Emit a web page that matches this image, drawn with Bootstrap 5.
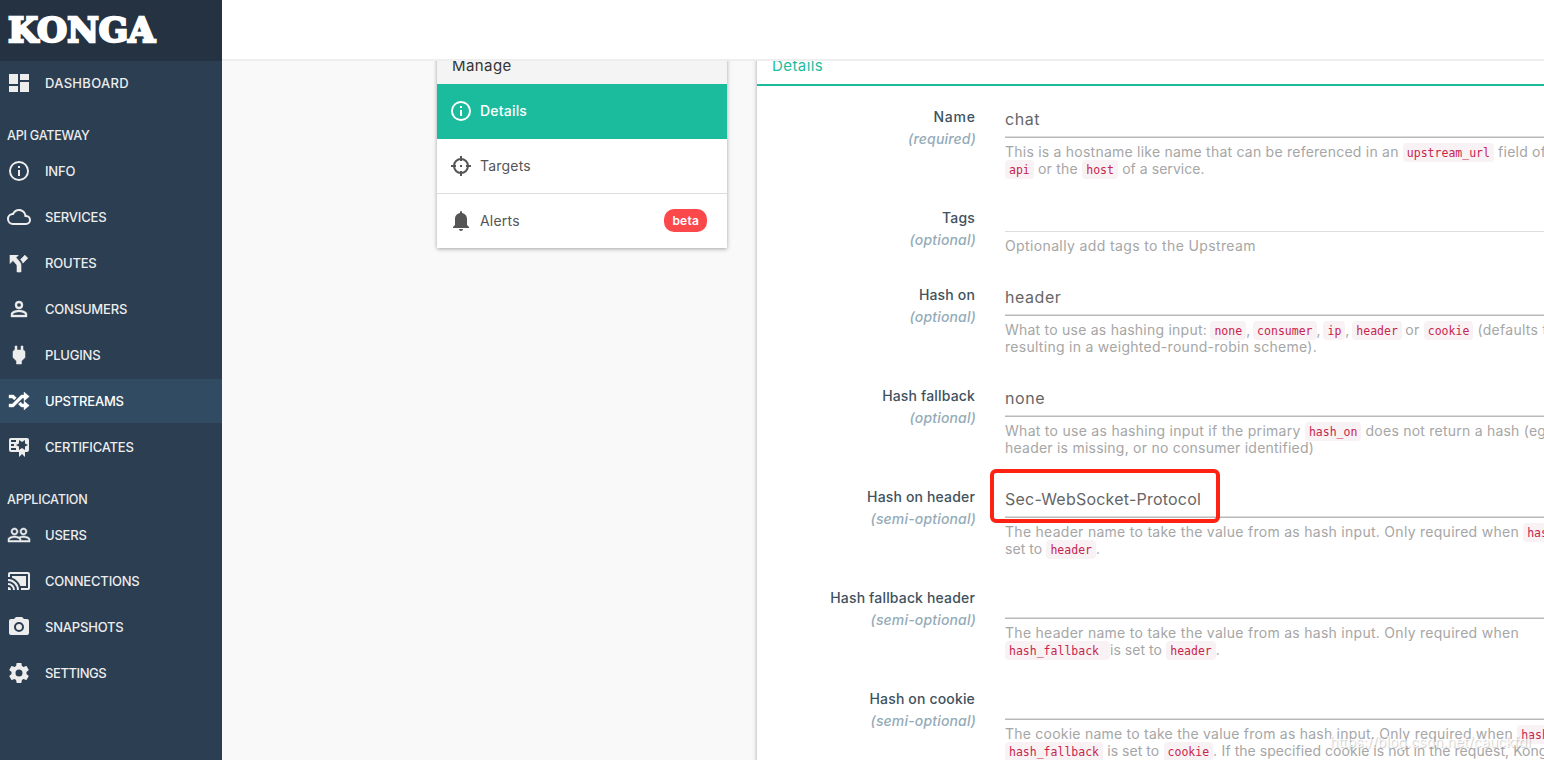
<!DOCTYPE html>
<html lang="en">
<head>
<meta charset="utf-8">
<meta name="viewport" content="width=device-width, initial-scale=1">
<title>Konga</title>
<link rel="stylesheet" href="https://cdn.jsdelivr.net/npm/bootstrap@5.3.0/dist/css/bootstrap.min.css">
<style>
  body{font-family:Inter,"Open Sans",sans-serif;font-size:14px;background:#f9f9f9;height:760px;overflow:hidden;color:#555}
  svg{fill:currentColor;flex:none}
  .side{width:222px;background:#2b3e52;color:#ededed}
  .brand{height:61px;background:#243241;padding:0 0 0 6px}
  .side .nav-link{height:44px;margin-bottom:2px;padding:0 0 0 7px;gap:14px;color:#ededed;font-size:13px;font-weight:500;letter-spacing:-.2px}
  .side .nav-link span{padding-top:2px}
  .side .nav-link.active{background:#314b63;color:#fff}
  .side h6{height:42px;margin:0;padding:7px 0 0 7px;font-size:12.6px;line-height:44px;font-weight:500;letter-spacing:-.25px}
  .side .roomy{letter-spacing:.3px}
  .side .snug{letter-spacing:-.42px}
  .topbar{height:61px;background:#fff;border-bottom:2px solid #eee}
  .stage{overflow:hidden;padding-left:215px;gap:30px}
  .panel{margin-top:-13px;background:#fff;box-shadow:0 1px 4px rgba(0,0,0,.35)}
  .manage{width:290px;height:200px}
  .details{width:830px;height:740px}
  .panel-top{height:36px;line-height:36px;padding-left:15px;font-size:15px;letter-spacing:.42px}
  .manage .panel-top{background:#f4f4f4;color:#333}
  .details .panel-top{height:38px;border-bottom:2px solid #1bbc9d;color:#1bbc9d}
  .manage .list-group-item{height:55px;padding:0 20px 0 12px;gap:7px;border:0;border-bottom:1px solid #ddd;color:#555;font-size:14px;letter-spacing:.2px}
  .manage .list-group-item.active{background:#1bbc9d;color:#fff;font-weight:500;border-color:#1bbc9d;margin:0}
  .manage .list-group-item:last-child{border:0;height:54px}
  .manage .list-group-item>span:nth-child(2){padding-bottom:2px}
  .manage .badge{background:#fb484b;font-size:12px;font-weight:600;height:23px;line-height:23px;padding:0 8px;border-radius:10px;margin-bottom:1px}
  form{padding-top:20px}
  .field{height:101px}
  .field.brief{height:77px}
  .cap{width:218px;text-align:right;line-height:22px;color:#3f5260;font-weight:500;letter-spacing:.16px}
  .cap .roomy{letter-spacing:.8px;margin-right:-.8px}
  .cap em{display:block;color:#94abb8;margin-right:-1px}
  .entry{width:570px;margin-left:30px;position:relative}
  .value{height:32px;border-bottom:1px solid #b9b9b9;box-shadow:inset 0 -1px #dcdcdc;font-size:16px;line-height:26px;color:#666;letter-spacing:.55px}
  .value .snug{letter-spacing:.22px}
  .brief .value{height:25px;border-bottom:1px solid #ddd;box-shadow:none}
  .hint{padding-top:5px;line-height:17px;color:#a6a6a6;white-space:nowrap;letter-spacing:.28px}
  .hint .roomy{letter-spacing:.37px}
  .hint .even{letter-spacing:.23px}
  .hint .snug{letter-spacing:.05px}
  .hint .run{letter-spacing:-.5px}
  code{font:11.5px/12px "DejaVu Sans Mono",monospace;color:#c7254e;background:#f9f2f4;border-radius:4px;padding:3px 4px 2px;letter-spacing:0;white-space:pre}
  .flagged{position:absolute;left:-15px;top:-17px;width:230px;height:54px;border:4px solid #ff2213;border-radius:6px}
  .stamp{position:absolute;left:1330px;top:731px;line-height:22px;font-size:14px;letter-spacing:.05px;color:rgba(255,255,255,.85);text-shadow:1px 1px 1px rgba(120,120,120,.4);white-space:nowrap}
</style>
<script src="https://cdn.jsdelivr.net/npm/bootstrap@5.3.0/dist/js/bootstrap.bundle.min.js"></script>
</head>
<body class="d-flex">
<aside class="side h-100 flex-shrink-0">
  <div class="brand"><svg width="156" height="61"><text x="2" y="42" font-family="DejaVu Serif" font-weight="700" font-size="34" textLength="147" lengthAdjust="spacingAndGlyphs" fill="#fff" stroke="#fff" stroke-width="2.4">KONGA</text></svg></div>
  <nav class="nav flex-column flex-nowrap">
    <a class="nav-link d-flex align-items-center"><svg width="24" height="24" viewBox="0 0 24 24"><path d="M13,3V9H22V3M13,21H22V11H13M2,21H11V15H2M2,13H11V3H2V13Z"/></svg><span class="roomy">DASHBOARD</span></a>
    <h6>API GATEWAY</h6>
    <a class="nav-link d-flex align-items-center"><svg width="24" height="24" viewBox="0 0 24 24"><path d="M11,9H13V7H11M12,20C7.59,20 4,16.41 4,12C4,7.59 7.59,4 12,4C16.41,4 20,7.59 20,12C20,16.41 16.41,20 12,20M12,2A10,10 0 0,0 2,12A10,10 0 0,0 12,22A10,10 0 0,0 22,12A10,10 0 0,0 12,2M11,17H13V11H11V17Z"/></svg><span>INFO</span></a>
    <a class="nav-link d-flex align-items-center"><svg width="24" height="24" viewBox="0 0 24 24"><path d="M19,18H6A4,4 0 0,1 2,14A4,4 0 0,1 6,10H6.71C7.37,7.69 9.5,6 12,6A5.5,5.5 0 0,1 17.5,11.5V12H19A3,3 0 0,1 22,15A3,3 0 0,1 19,18M19.35,10.03C18.67,6.59 15.64,4 12,4C9.11,4 6.6,5.64 5.35,8.03C2.34,8.36 0,10.9 0,14A6,6 0 0,0 6,20H19A5,5 0 0,0 24,15C24,12.36 21.95,10.22 19.35,10.03Z"/></svg><span>SERVICES</span></a>
    <a class="nav-link d-flex align-items-center"><svg width="24" height="24" viewBox="0 0 24 24"><path d="M3,4V12.5L6,9.5L9,13C10,14 10,15 10,15V21H14V14C14,14 14,13 13.47,12C12.94,11 12,10 12,10L9,6.58L11.5,4M18,4L13.54,8.47L14,9C14,9 14.93,10 15.47,11C15.68,11.4 15.8,11.79 15.87,12.13L21,7" stroke="currentColor" stroke-width=".6"/></svg><span>ROUTES</span></a>
    <a class="nav-link d-flex align-items-center"><svg width="24" height="24" viewBox="0 0 24 24"><path d="M12,13C9.33,13 4,14.33 4,17V20H20V17C20,14.33 14.67,13 12,13M12,4A4,4 0 0,0 8,8A4,4 0 0,0 12,12A4,4 0 0,0 16,8A4,4 0 0,0 12,4M12,14.9C14.97,14.9 18.1,16.36 18.1,17V18.1H5.9V17C5.9,16.36 9,14.9 12,14.9M12,5.9A2.1,2.1 0 0,1 14.1,8A2.1,2.1 0 0,1 12,10.1A2.1,2.1 0 0,1 9.9,8A2.1,2.1 0 0,1 12,5.9Z" stroke="currentColor" stroke-width=".4"/></svg><span>CONSUMERS</span></a>
    <a class="nav-link d-flex align-items-center"><svg width="24" height="24" viewBox="0 0 24 24"><path d="M16,7V3H14V7H10V3H8V7H8C7,7 6,8 6,9V14.5L9.5,18V21H14.5V18L18,14.5V9C18,8 17,7 16,7Z" stroke="currentColor" stroke-width=".5"/></svg><span>PLUGINS</span></a>
    <a class="nav-link active d-flex align-items-center"><svg width="24" height="24" viewBox="0 0 24 24"><path d="M17,3L22.25,7.5L17,12V9H15.5L6.5,18H2V15H5.26L14.26,6H17V3M2,6H6.5L9.32,8.82L7.2,10.94L5.26,9H2V6M17,12L22.25,16.5L17,21V18H14.26L11.44,15.18L13.56,13.06L15.5,15H17V12Z" stroke="currentColor" stroke-width=".4"/></svg><span>UPSTREAMS</span></a>
    <a class="nav-link d-flex align-items-center"><svg width="24" height="24" viewBox="0 0 24 24"><path d="M4,3C2.89,3 2,3.89 2,5V15A2,2 0 0,0 4,17H12V22L15,19L18,22V17H20A2,2 0 0,0 22,15V5A2,2 0 0,0 20,3H4M12,5L15,7L18,5V8.5L21,10L18,11.5V15L15,13L12,15V11.5L9,10L12,8.5V5M4,5H9V7H4V5M4,9H7V11H4V9M4,13H9V15H4V13Z"/></svg><span>CERTIFICATES</span></a>
    <h6>APPLICATION</h6>
    <a class="nav-link d-flex align-items-center"><svg width="24" height="24" viewBox="0 0 24 24"><path d="M16.5,13C15.3,13 13.43,13.34 12,14C10.57,13.33 8.7,13 7.5,13C5.33,13 1,14.08 1,16.25V19H23V16.25C23,14.08 18.67,13 16.5,13M12.5,17.5H2.5V16.25C2.5,15.79 5.04,14.5 7.5,14.5C9.96,14.5 12.5,15.79 12.5,16.25V17.5M21.5,17.5H14V16.25C14,15.79 13.67,15.39 13.12,15.03C13.96,14.75 15.09,14.5 16.5,14.5C18.96,14.5 21.5,15.79 21.5,16.25V17.5M7.5,12C9.43,12 11,10.43 11,8.5C11,6.57 9.43,5 7.5,5C5.57,5 4,6.57 4,8.5C4,10.43 5.57,12 7.5,12M7.5,6.5C8.6,6.5 9.5,7.4 9.5,8.5C9.5,9.6 8.6,10.5 7.5,10.5C6.4,10.5 5.5,9.6 5.5,8.5C5.5,7.4 6.4,6.5 7.5,6.5M16.5,12C18.43,12 20,10.43 20,8.5C20,6.57 18.43,5 16.5,5C14.57,5 13,6.57 13,8.5C13,10.43 14.57,12 16.5,12M16.5,6.5C17.6,6.5 18.5,7.4 18.5,8.5C18.5,9.6 17.6,10.5 16.5,10.5C15.4,10.5 14.5,9.6 14.5,8.5C14.5,7.4 15.4,6.5 16.5,6.5Z" stroke="currentColor" stroke-width=".5"/></svg><span>USERS</span></a>
    <a class="nav-link d-flex align-items-center"><svg width="24" height="24" viewBox="0 0 24 24"><path d="M21,3H3C1.89,3 1,3.89 1,5V8H3V5H21V19H14V21H21A2,2 0 0,0 23,19V5C23,3.89 22.1,3 21,3M1,10V12A9,9 0 0,1 10,21H12C12,14.92 7.07,10 1,10M19,7H5V8.63C8.96,9.91 12.09,13.04 13.37,17H19M1,14V16A5,5 0 0,1 6,21H8A7,7 0 0,0 1,14M1,18V21H4A3,3 0 0,0 1,18Z"/></svg><span>CONNECTIONS</span></a>
    <a class="nav-link d-flex align-items-center"><svg width="24" height="24" viewBox="0 0 24 24"><path d="M4,4H7L9,2H15L17,4H20A2,2 0 0,1 22,6V18A2,2 0 0,1 20,20H4A2,2 0 0,1 2,18V6A2,2 0 0,1 4,4M12,7A5,5 0 0,0 7,12A5,5 0 0,0 12,17A5,5 0 0,0 17,12A5,5 0 0,0 12,7M12,9A3,3 0 0,1 15,12A3,3 0 0,1 12,15A3,3 0 0,1 9,12A3,3 0 0,1 12,9Z"/></svg><span>SNAPSHOTS</span></a>
    <a class="nav-link d-flex align-items-center"><svg width="24" height="24" viewBox="0 0 24 24"><path d="M12,15.5A3.5,3.5 0 0,1 8.5,12A3.5,3.5 0 0,1 12,8.5A3.5,3.5 0 0,1 15.5,12A3.5,3.5 0 0,1 12,15.5M19.43,12.97C19.47,12.65 19.5,12.33 19.5,12C19.5,11.67 19.47,11.34 19.43,11L21.54,9.37C21.73,9.22 21.78,8.95 21.66,8.73L19.66,5.27C19.54,5.05 19.27,4.96 19.05,5.05L16.56,6.05C16.04,5.66 15.5,5.32 14.87,5.07L14.5,2.42C14.46,2.18 14.25,2 14,2H10C9.75,2 9.54,2.18 9.5,2.42L9.13,5.07C8.5,5.32 7.96,5.66 7.44,6.05L4.95,5.05C4.73,4.96 4.46,5.05 4.34,5.27L2.34,8.73C2.21,8.95 2.27,9.22 2.46,9.37L4.57,11C4.53,11.34 4.5,11.67 4.5,12C4.5,12.33 4.53,12.65 4.57,12.97L2.46,14.63C2.27,14.78 2.21,15.05 2.34,15.27L4.34,18.73C4.46,18.95 4.73,19.03 4.95,18.95L7.44,17.94C7.96,18.34 8.5,18.68 9.13,18.93L9.5,21.58C9.54,21.82 9.75,22 10,22H14C14.25,22 14.46,21.82 14.5,21.58L14.87,18.93C15.5,18.67 16.04,18.34 16.56,17.94L19.05,18.95C19.27,19.03 19.54,18.95 19.66,18.73L21.66,15.27C21.78,15.05 21.73,14.78 21.54,14.63L19.43,12.97Z"/></svg><span class="snug">SETTINGS</span></a>
  </nav>
</aside>
<div class="d-flex flex-column flex-grow-1 overflow-hidden">
  <header class="topbar flex-shrink-0"></header>
  <main class="stage d-flex align-items-start flex-grow-1">
    <section class="panel manage flex-shrink-0">
      <div class="panel-top">Manage</div>
      <div class="list-group list-group-flush rounded-0">
        <a class="list-group-item active d-flex align-items-center"><svg width="24" height="24" viewBox="0 0 24 24"><path d="M11,9H13V7H11M12,20C7.59,20 4,16.41 4,12C4,7.59 7.59,4 12,4C16.41,4 20,7.59 20,12C20,16.41 16.41,20 12,20M12,2A10,10 0 0,0 2,12A10,10 0 0,0 12,22A10,10 0 0,0 22,12A10,10 0 0,0 12,2M11,17H13V11H11V17Z"/></svg><span>Details</span></a>
        <a class="list-group-item d-flex align-items-center"><svg width="24" height="24" viewBox="0 0 24 24"><circle cx="12" cy="12" r="7" fill="none" stroke="currentColor" stroke-width="2"/><path d="M11 2h2v5h-2zM11 17h2v5h-2zM2 11h5v2H2zM17 11h5v2h-5zM11 11h2v2h-2z"/></svg><span>Targets</span></a>
        <a class="list-group-item d-flex align-items-center"><svg width="24" height="24" viewBox="0 0 24 24"><path d="M14,20A2,2 0 0,1 12,22A2,2 0 0,1 10,20H14M12,2A1,1 0 0,1 13,3V4.08C15.84,4.56 18,7.03 18,10V16L20,18V19H4V18L6,16V10C6,7.03 8.16,4.56 11,4.08V3A1,1 0 0,1 12,2Z"/></svg><span>Alerts</span><span class="badge ms-auto">beta</span></a>
      </div>
    </section>
    <section class="panel details flex-shrink-0">
      <div class="panel-top">Details</div>
      <form>
        <div class="field d-flex"><label class="cap"><span class="roomy">Name</span><em>(required)</em></label>
          <div class="entry"><div class="value">chat</div><div class="hint"><span class="even">This is a hostname like name that can be referenced in an <code>upstream_url</code> field of an</span><br><code>api</code> <span class="even">or the</span> <code>host</code> <span class="snug">of a service.</span></div></div></div>
        <div class="field brief d-flex"><label class="cap">Tags<em>(optional)</em></label>
          <div class="entry"><div class="value"></div><div class="hint"><span class="roomy">Optionally add tags to the Upstream</span></div></div></div>
        <div class="field d-flex"><label class="cap">Hash on<em>(optional)</em></label>
          <div class="entry"><div class="value">header</div><div class="hint"><span class="even">What to use as hashing input:</span><span class="run"> <code>none</code>, <code>consumer</code>, <code>ip</code>, <code>header</code> </span>or <code>cookie</code> (defaults to<br>resulting in a weighted-round-robin scheme).</div></div></div>
        <div class="field d-flex"><label class="cap">Hash fallback<em>(optional)</em></label>
          <div class="entry"><div class="value">none</div><div class="hint">What to use as hashing input if the primary <code>hash_on</code> <span class="even">does not return a hash (eg.</span><br><span class="even">header is missing, or no consumer identified)</span></div></div></div>
        <div class="field d-flex"><label class="cap">Hash on header<em>(semi-optional)</em></label>
          <div class="entry"><div class="value"><span class="snug">Sec-WebSocket-Protocol</span></div><div class="hint">The header name to take the value from as hash input. Only required when <code>hash_on</code> is<br><span class="snug">set to</span> <code>header</code>.</div><div class="flagged"></div></div></div>
        <div class="field d-flex"><label class="cap">Hash fallback header<em>(semi-optional)</em></label>
          <div class="entry"><div class="value"></div><div class="hint">The header name to take the value from as hash input. Only required when<br><code>hash_fallback </code><span class="snug">is set to</span> <code>header</code>.</div></div></div>
        <div class="field d-flex"><label class="cap">Hash on cookie<em>(semi-optional)</em></label>
          <div class="entry"><div class="value"></div><div class="hint"><span class="even">The cookie name to take the value from as hash input. Only required when</span> <code>hash_on</code> or<br><code>hash_fallback</code> <span class="snug">is set to</span> <code>cookie</code>. <span class="snug">If the specified cookie is not in the request, Kong will</span></div></div></div>
      </form>
    </section>
  </main>
</div>
<div class="stamp">https://blog.csdn.net/cauckfdl</div>
</body>
</html>
